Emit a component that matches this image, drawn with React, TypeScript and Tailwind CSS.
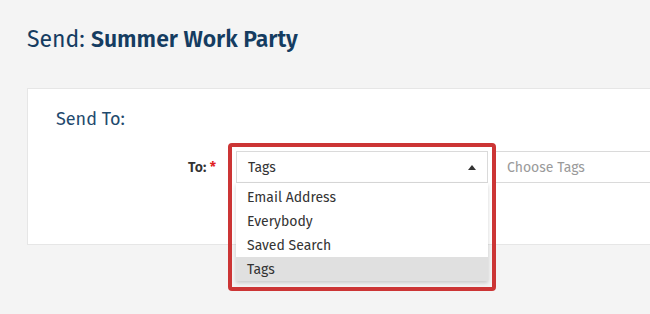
export default function App() {
  const options = ['Email Address', 'Everybody', 'Saved Search', 'Tags'];

  return (
    <div
      className="relative h-[314px] w-[650px] overflow-hidden bg-[#f4f4f4]"
      style={{ fontFamily: '"Fira Sans", "Open Sans", "Noto Sans", sans-serif' }}
    >
      <h1 className="pl-[27px] pt-[24px] text-[23px] leading-[30px] text-[#153c61]">
        Send: <span className="font-semibold">Summer Work Party</span>
      </h1>

      <div className="ml-[27px] mt-[34px] w-[700px] border border-[#e6e6e6] bg-white pb-[61px] pl-[28px] pt-[18px]">
        <h2 className="text-[18px] leading-6 text-[#1f4a6e]">Send To:</h2>

        <div className="mt-[20px] flex items-center">
          <label className="w-[160px] text-right text-[14px] font-semibold text-[#333]">
            To: <span className="text-[#e02020]">*</span>
          </label>

          <div className="relative ml-[20px]">
            <div className="flex h-[32px] w-[252px] items-center justify-between border border-[#dadada] bg-white pl-[11px] pr-[11px] text-[14px] text-[#333]">
              <span>Tags</span>
              <svg width="8" height="5" viewBox="0 0 8 5">
                <path d="M0 5 L4 0 L8 5 Z" fill="#333" />
              </svg>
            </div>

            <ul className="absolute left-0 top-[32px] z-10 w-[252px] bg-white pt-[2px] shadow-[0_2px_4px_rgba(0,0,0,0.18)]">
              {options.map((o) => (
                <li
                  key={o}
                  className={`flex h-6 items-center pl-[11px] text-[14px] text-[#333] ${
                    o === 'Tags' ? 'bg-[#e0e0e0]' : ''
                  }`}
                >
                  {o}
                </li>
              ))}
            </ul>

            <div className="pointer-events-none absolute -left-[8px] -top-[8px] z-20 h-[148px] w-[268px] rounded-[4px] border-[4px] border-[#cc3535]" />
          </div>

          <div className="ml-[7px] flex h-[32px] w-[200px] items-center border border-[#dadada] pl-[11px] text-[14px] text-[#9a9a9a]">
            Choose Tags
          </div>
        </div>
      </div>
    </div>
  );
}
